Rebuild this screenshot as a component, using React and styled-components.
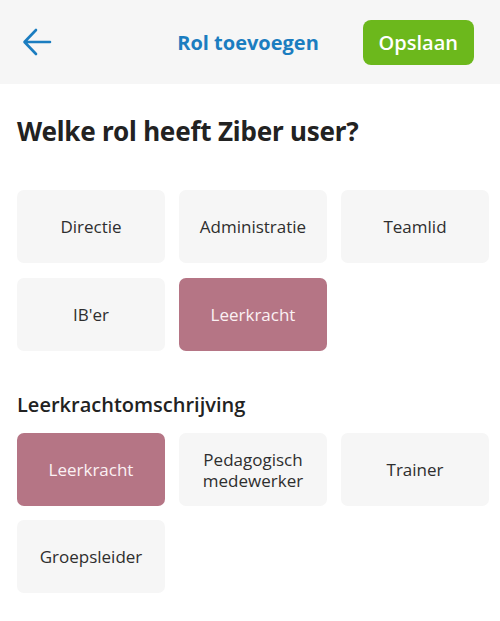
import React, { useState } from "react";
import styled, { createGlobalStyle } from "styled-components";

const GlobalStyle = createGlobalStyle`
  body {
    margin: 0;
    background: #fff;
    font-family: "Open Sans", "Noto Sans", sans-serif;
    color: #2b2b2b;
  }
`;

const Header = styled.header`
  height: 84px;
  background: #f6f6f6;
  display: grid;
  grid-template-columns: 1fr auto 1fr;
  align-items: center;
  padding: 0 26px 0 22px;
`;

const BackButton = styled.button`
  justify-self: start;
  background: none;
  border: 0;
  padding: 0;
  width: 32px;
  height: 32px;
  display: flex;
  align-items: center;
  cursor: pointer;
`;

const Title = styled.h1`
  margin: 0;
  font-size: 20px;
  font-weight: 700;
  color: #1b7dc0;
`;

const SaveButton = styled.button`
  justify-self: end;
  background: #6cb81c;
  color: #fff;
  border: 0;
  border-radius: 8px;
  height: 45px;
  padding: 0 16px;
  font-family: inherit;
  font-size: 20px;
  font-weight: 600;
  cursor: pointer;
`;

const Content = styled.main`
  padding: 29px 11px 0 17px;
`;

const Question = styled.h2`
  margin: 0 0 41px;
  font-family: "Noto Sans", "Open Sans", sans-serif;
  font-size: 26px;
  font-weight: 700;
  color: #222;
  letter-spacing: -0.2px;
`;

const SubHeading = styled.h3`
  margin: 40px 0 15px;
  font-size: 20px;
  font-weight: 600;
  color: #222;
`;

const Grid = styled.div`
  display: grid;
  grid-template-columns: repeat(3, 148px);
  column-gap: 14px;
  row-gap: ${(p) => p.$rowGap || 14}px;
`;

const Tile = styled.button`
  height: 73px;
  border: 0;
  border-radius: 7px;
  background: ${(p) => (p.$active ? "#b57585" : "#f6f6f6")};
  color: ${(p) => (p.$active ? "#fbf1f3" : "#2e2e2e")};
  font-family: inherit;
  font-size: 17px;
  line-height: 21px;
  padding: 0 10px;
  display: flex;
  align-items: center;
  justify-content: center;
  text-align: center;
  cursor: pointer;
`;

const roles = ["Directie", "Administratie", "Teamlid", "IB'er", "Leerkracht"];
const descriptions = [
  "Leerkracht",
  "Pedagogisch medewerker",
  "Trainer",
  "Groepsleider",
];

function ArrowLeft() {
  return (
    <svg width="30" height="28" viewBox="0 0 30 28" fill="none">
      <path
        d="M28 14H3M14 2L2.5 14L14 26"
        stroke="#1b7dc0"
        strokeWidth="2.6"
        strokeLinecap="round"
        strokeLinejoin="round"
      />
    </svg>
  );
}

export default function App() {
  const [role, setRole] = useState("Leerkracht");
  const [desc, setDesc] = useState("Leerkracht");

  return (
    <>
      <GlobalStyle />
      <Header>
        <BackButton aria-label="Terug">
          <ArrowLeft />
        </BackButton>
        <Title>Rol toevoegen</Title>
        <SaveButton>Opslaan</SaveButton>
      </Header>
      <Content>
        <Question>Welke rol heeft Ziber user?</Question>
        <Grid $rowGap={15}>
          {roles.map((r) => (
            <Tile key={r} $active={role === r} onClick={() => setRole(r)}>
              {r}
            </Tile>
          ))}
        </Grid>
        <SubHeading>Leerkrachtomschrijving</SubHeading>
        <Grid>
          {descriptions.map((d) => (
            <Tile key={d} $active={desc === d} onClick={() => setDesc(d)}>
              {d}
            </Tile>
          ))}
        </Grid>
      </Content>
    </>
  );
}
